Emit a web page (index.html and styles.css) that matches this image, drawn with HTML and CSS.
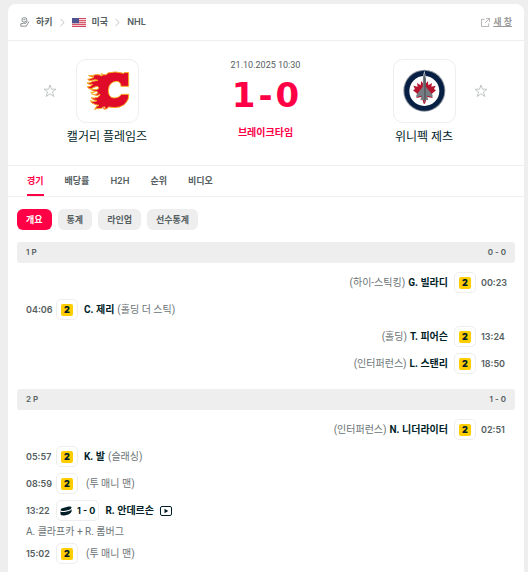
FILE: index.html
```html
<!DOCTYPE html>
<html lang="ko">
<head>
    <meta charset="UTF-8">
    <meta name="viewport" content="width=device-width, initial-scale=1.0">
    <title>캘거리 플레임즈 - 위니펙 제츠</title>
    <link rel="stylesheet" href="styles.css">
</head>
<body>
    <main class="card">
        <header class="topbar">
            <nav class="breadcrumb">
                <svg class="sport-icon" viewBox="0 0 12 12" fill="none" stroke="#555e61" stroke-width=".8">
                    <path d="M2.5 5V2.2Q2.5 1 4 1H6.5Q8 1 8 2.5V4L6.5 6H4ZM4 3.2H6.5M1 8.2L4 7.5H7L9 4.5M1 8V11H7.5L10.8 5.5"/>
                </svg>
                <a href="#">하키</a>
                <svg class="chevron" viewBox="0 0 5 9"><path d="M.5 1L4.2 4.5L.5 8" fill="none" stroke="#c1c5c6"/></svg>
                <svg class="flag" viewBox="0 0 14 9">
                    <path fill="#f4dde0" d="M0 0H14V9H0Z"/>
                    <path stroke="#d2455c" stroke-width="1" d="M0 .5H14M0 2.7H14M0 4.7H14M0 6.6H14M0 8.5H14"/>
                    <path fill="#4d5490" d="M0 0H7V5.2H0Z"/>
                </svg>
                <a href="#">미국</a>
                <svg class="chevron" viewBox="0 0 5 9"><path d="M.5 1L4.2 4.5L.5 8" fill="none" stroke="#c1c5c6"/></svg>
                <a class="latin" href="#">NHL</a>
            </nav>
            <a class="new-window" href="#">
                <svg viewBox="0 0 10 10" fill="none" stroke="#999" stroke-width=".8"><path d="M4 1.5H.5V9.5H8.5V6M5.5 .5H9.5V4.5M9.5 .5L4.5 5.5"/></svg>
                <span>새 창</span>
            </a>
        </header>

        <section class="match">
            <button class="star" aria-label="캘거리 플레임즈">
                <svg viewBox="0 0 14 14"><path d="M7 1L8.5 5.2H13L9.4 7.9L10.8 12.5L7 9.8L3.2 12.5L4.6 7.9L1 5.2H5.5Z"/></svg>
            </button>
            <div class="team">
                <a class="logo" href="#">
                    <svg viewBox="3 3 183 183">
                        <path fill="#e00b28" stroke="#f8ad20" stroke-width="3" stroke-linejoin="round" d="M158 41V82H135Q134 67 121 67Q99 69 97 93Q97 117 115 117Q130 117 136 106H158L157 119Q148 144 117 146L98 144Q94 151 84 151Q90 146 85 143Q77 150 66 149Q60 148 56 152Q59 141 69 139Q57 138 53 134Q46 133 43 125Q51 130 63 125Q51 124 45 116Q54 119 65 115Q73 110 72 105Q66 112 56 108Q49 107 44 100Q54 103 59 97Q49 98 44 90Q54 94 65 91Q72 86 64 82Q53 84 45 90Q38 91 34 83Q44 84 50 76Q39 78 33 72Q43 73 50 67Q61 65 66 64Q57 60 48 64Q39 68 35 61Q48 60 54 54Q45 54 38 50Q51 51 59 47Q70 46 78 51Q82 49 75 44Q92 52 95 42Q117 35 143 43L147 40Z"/>
                        <path fill="#fff" stroke="#f8ad20" stroke-width="3" d="M47 105Q55 108 62 105Q69 101 61 96Q53 102 47 101Z"/>
                        <circle cx="83" cy="148" r="2" fill="#e0556c"/>
                    </svg>
                </a>
                <a class="team-name" href="#">캘거리 플레임즈</a>
            </div>
            <div class="result">
                <div class="date">21.10.2025 10:30</div>
                <div class="score"><span>1</span><span>-</span><span>0</span></div>
                <div class="status">브레이크타임</div>
            </div>
            <div class="team">
                <a class="logo" href="#">
                    <svg viewBox="3 3 183 183">
                        <circle cx="94" cy="95" r="63" fill="#8b929c"/>
                        <circle cx="94" cy="95" r="60" fill="#071f43"/>
                        <circle cx="94" cy="96" r="45" fill="#fff"/>
                        <path fill="#fff" d="M94 35L100 60H88Z"/>
                        <path fill="#b5152f" d="M94 65L98 74L105 66L106 79L117 72L115 83L128 80L123 90L129 94L115 106L119 117L102 114L96 134H92L86 114L70 117L74 106L60 94L66 90L61 80L74 83L72 72L83 79L84 66L91 74Z"/>
                        <path fill="#777c82" d="M94 40L98 54L99 84L119 108L118 115L102 110L106 124L96 122L94 132L92 122L82 124L86 110L70 115L70 108L89 84L90 54Z"/>
                        <path fill="#505459" d="M94 51L98 60V118L94 125Z"/>
                    </svg>
                </a>
                <a class="team-name" href="#">위니펙 제츠</a>
            </div>
            <button class="star" aria-label="위니펙 제츠">
                <svg viewBox="0 0 14 14"><path d="M7 1L8.5 5.2H13L9.4 7.9L10.8 12.5L7 9.8L3.2 12.5L4.6 7.9L1 5.2H5.5Z"/></svg>
            </button>
        </section>

        <nav class="tabs">
            <a class="active" href="#">경기</a>
            <a href="#">배당률</a>
            <a class="latin" href="#">H2H</a>
            <a href="#">순위</a>
            <a href="#">비디오</a>
        </nav>

        <div class="filters">
            <button class="active">개요</button>
            <button>통계</button>
            <button>라인업</button>
            <button>선수통계</button>
        </div>

        <section class="period">
            <h2><span>1 P</span><span>0 - 0</span></h2>
            <div class="row away">
                <span class="time">00:23</span>
                <span class="badge"><b>2</b></span>
                <span class="event"><a href="#">G. 빌라디</a> <span>(하이-스틱킹)</span></span>
            </div>
            <div class="row">
                <span class="time">04:06</span>
                <span class="badge"><b>2</b></span>
                <span class="event"><a href="#">C. 제리</a> <span>(홀딩 더 스틱)</span></span>
            </div>
            <div class="row away">
                <span class="time">13:24</span>
                <span class="badge"><b>2</b></span>
                <span class="event"><a href="#">T. 피어슨</a> <span>(홀딩)</span></span>
            </div>
            <div class="row away">
                <span class="time">18:50</span>
                <span class="badge"><b>2</b></span>
                <span class="event"><a href="#">L. 스탠리</a> <span>(인터퍼런스)</span></span>
            </div>
        </section>

        <section class="period">
            <h2><span>2 P</span><span>1 - 0</span></h2>
            <div class="row away">
                <span class="time">02:51</span>
                <span class="badge"><b>2</b></span>
                <span class="event"><a href="#">N. 니더라이터</a> <span>(인터퍼런스)</span></span>
            </div>
            <div class="row">
                <span class="time">05:57</span>
                <span class="badge"><b>2</b></span>
                <span class="event"><a href="#">K. 발</a> <span>(슬래싱)</span></span>
            </div>
            <div class="row">
                <span class="time">08:59</span>
                <span class="badge"><b>2</b></span>
                <span class="event no-player"><span>(투 매니 맨)</span></span>
            </div>
            <div class="row">
                <span class="time">13:22</span>
                <span class="badge goal">
                    <svg viewBox="0 0 12 10"><path fill="#001e28" d="M.4 4.2Q.4 2.8 3 2L8.5 .5Q11.4 0 11.6 1.5Q11.5 3.2 8.5 4L4 4.9Q1.2 5.2 .4 4.2ZM.4 5.4Q2 6.3 4.5 5.9L9 5Q11 4.4 11.6 3.3V5.6Q11.2 7.4 8.4 8.4L4.5 9.4Q1 9.8 .5 8.2Z"/></svg>
                    <span>1 - 0</span>
                </span>
                <span class="event"><a href="#">R. 안데르손</a></span>
                <a class="video" href="#" aria-label="비디오">
                    <svg viewBox="0 0 12 10"><rect x=".5" y=".5" width="11" height="9" rx="1.5" fill="none" stroke="#001e28"/><path fill="#001e28" d="M4.5 2.7L8.3 5L4.5 7.3Z"/></svg>
                </a>
            </div>
            <div class="assist">A. 클라프카 + R. 롬버그</div>
            <div class="row">
                <span class="time">15:02</span>
                <span class="badge"><b>2</b></span>
                <span class="event no-player"><span>(투 매니 맨)</span></span>
            </div>
        </section>
    </main>
</body>
</html>
```
FILE: styles.css
```css
* {
    box-sizing: border-box;
}

body {
    margin: 0;
    padding: 4px 4px 0 8px;
    background-color: #eee;
    color: #555e61;
    font-family: Roboto, "Noto Sans CJK KR", sans-serif;
    font-size: 10px;
    line-height: 16px;
}

a {
    color: inherit;
    text-decoration: none;
}

button {
    border: none;
    padding: 0;
    background: none;
    color: inherit;
    font: inherit;
    cursor: pointer;
}

svg {
    display: block;
}

.card {
    min-height: calc(100vh - 4px);
    padding-bottom: 4px;
    background-color: #fff;
    border-radius: 8px 8px 0 0;
}

.latin {
    font-family: Inter, sans-serif;
    font-size: 9px;
    font-weight: 600;
}

/* Breadcrumb */
.topbar {
    display: flex;
    justify-content: space-between;
    align-items: center;
    height: 37px;
    padding: 0 12px;
    border-bottom: 1px solid #eee;
    font-size: 9px;
    font-weight: 700;
}

.breadcrumb {
    display: flex;
    align-items: center;
    gap: 6px;
}

.sport-icon {
    width: 10px;
    height: 10px;
}

.chevron {
    width: 5px;
    height: 9px;
    margin: 0 1px;
}

.flag {
    width: 14px;
    height: 9px;
}

.new-window {
    display: flex;
    align-items: center;
    gap: 3px;
    color: #999;
    text-decoration: underline;
}

.new-window svg {
    width: 9px;
    height: 9px;
}

/* Teams and score */
.match {
    display: flex;
    justify-content: center;
    height: 125px;
    padding: 18px 36px 0 35px;
    border-bottom: 1px solid #eee;
}

.star {
    width: 14px;
    height: 64px;
    flex: none;
}

.star svg {
    width: 14px;
    height: 14px;
    fill: none;
    stroke: #c1c5c6;
}

.team {
    flex: 1;
    display: flex;
    flex-direction: column;
    align-items: center;
    max-width: 100px;
    color: #001e28;
    font-size: 12px;
    line-height: 18px;
    white-space: nowrap;
}

.logo {
    width: 63px;
    height: 64px;
    margin-bottom: 5px;
    border: 1px solid #eee;
    border-radius: 10px;
}

.result {
    flex: 1;
    text-align: center;
}

.date {
    margin-top: -2px;
    font-size: 9px;
}

.score {
    display: flex;
    justify-content: center;
    gap: 3px;
    margin-bottom: 8px;
    color: #ff0046;
    font-family: "DejaVu Sans", sans-serif;
    font-size: 34px;
    font-weight: 700;
    line-height: 44px;
}

.status {
    color: #ff0046;
    font-weight: 700;
}

/* Tabs */
.tabs {
    display: flex;
    gap: 21px;
    height: 31px;
    padding: 0 19px;
    border-bottom: 1px solid #eee;
    font-size: 9px;
    font-weight: 700;
    line-height: 30px;
}

.tabs .active {
    border-bottom: 2px solid #ff0046;
    color: #ff0046;
}

.filters {
    display: flex;
    gap: 6px;
    padding: 12px 9px;
}

.filters button {
    height: 21px;
    padding: 0 9px;
    border-radius: 6px;
    background-color: #eee;
    font-size: 9px;
    font-weight: 700;
}

.filters .active {
    background-color: #ff0046;
    color: #fff;
}

/* Periods */
.period {
    padding: 0 9px;
    margin-bottom: 12px;
}

.period h2 {
    display: flex;
    justify-content: space-between;
    margin: 0 0 6px;
    padding: 0 9px;
    background-color: #eee;
    border-radius: 3px;
    font-family: Inter, sans-serif;
    font-size: 8px;
    font-weight: 600;
    line-height: 21px;
    word-spacing: normal;
}

.row {
    display: flex;
    align-items: center;
    gap: 5px;
    height: 27px;
    padding: 0 9px;
}

.away {
    flex-direction: row-reverse;
}

.time {
    width: 25px;
    font-family: Inter, sans-serif;
    font-size: 9px;
    font-weight: 600;
}

.badge {
    display: flex;
    justify-content: center;
    align-items: center;
    gap: 5px;
    min-width: 22px;
    height: 21px;
    border: 1px solid #eee;
    border-radius: 5px;
    color: #001e28;
    font-family: Inter, sans-serif;
    font-size: 9px;
    font-weight: 700;
}

.badge b {
    width: 12px;
    height: 12px;
    border-radius: 2px;
    background-color: #ffcd00;
    line-height: 12px;
    text-align: center;
}

.goal {
    padding: 0 3px;
}

.goal svg {
    width: 12px;
    height: 10px;
}

.event {
    display: flex;
    gap: 3px;
    margin: 0 1px;
}

.away .event {
    flex-direction: row-reverse;
}

.event span {
    color: #6b7376;
}

.event a {
    color: #001e28;
    font-weight: 700;
}

.no-player {
    margin-left: 3px;
}

.video svg {
    width: 12px;
    height: 10px;
}

.assist {
    padding: 0 9px;
    color: #6b7376;
}
```
